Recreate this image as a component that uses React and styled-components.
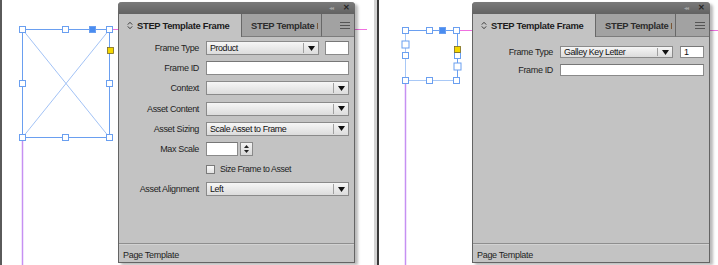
import React from 'react';
import styled, { createGlobalStyle } from 'styled-components';

const GlobalStyle = createGlobalStyle`
  html, body {
    margin: 0;
    padding: 0;
    background: #fff;
  }
  #root {
    width: 718px;
    height: 265px;
    overflow: hidden;
    font-family: "Liberation Sans", Arial, sans-serif;
  }
`;

const Page = styled.div`
  display: flex;
  width: 718px;
  height: 265px;
`;

const Shot = styled.div`
  display: flex;
  width: ${(p) => p.$w}px;
  height: 265px;
  flex: none;
`;

const Edge = styled.div`
  flex: none;
  width: ${(p) => (p.$band ? 6 : 2)}px;
  background: ${(p) =>
    p.$band
      ? 'linear-gradient(90deg, #fff 0 1px, #d3d3d3 1px 4px, #3a3a3a 4px)'
      : '#5a5a5a'};
`;

const Canvas = styled.div`
  position: relative;
  flex: 1;
  overflow: hidden;
`;

const Art = styled.svg`
  position: absolute;
  left: 0;
  top: 0;
  width: 100%;
  height: 100%;
  z-index: 0;
`;

const Panel = styled.div`
  position: relative;
  z-index: 1;
  box-sizing: border-box;
  width: ${(p) => p.$w}px;
  height: 261px;
  margin: 2px 0 0 ${(p) => p.$left}px;
  display: flex;
  flex-direction: column;
  background: #c3c3c3;
  border: 1px solid #646464;
  border-top: none;
  border-radius: 4px 4px 0 0;
  box-shadow: 3px 2px 3px rgba(0, 0, 0, 0.28);
`;

const TitleBar = styled.div`
  height: 12px;
  margin: 0 -1px;
  display: flex;
  align-items: center;
  justify-content: flex-end;
  gap: 10px;
  padding-right: 5px;
  border-radius: 4px 4px 0 0;
  background: linear-gradient(#7a7a7a, #626262);
`;

const Collapse = styled.span`
  font-size: 6px;
  letter-spacing: -1px;
  color: #a4a4a4;
  line-height: 1;
`;

const Close = styled.span`
  font-size: 8px;
  font-weight: bold;
  color: #262626;
  line-height: 1;
`;

const TabRow = styled.div`
  height: 23px;
  display: flex;
  background: #a2a2a2;
`;

const Tab = styled.div`
  box-sizing: border-box;
  flex: none;
  width: ${(p) => p.$w}px;
  display: flex;
  align-items: center;
  gap: 4px;
  padding: 0 ${(p) => (p.$active ? 0 : 3)}px 0 ${(p) => (p.$active ? 8 : 9)}px;
  overflow: hidden;
  white-space: nowrap;
  font-size: 9.4px;
  letter-spacing: -0.3px;
  font-weight: bold;
  color: ${(p) => (p.$active ? '#1c1c1c' : '#2c2c2c')};
  background: ${(p) => (p.$active ? '#c3c3c3' : '#a2a2a2')};
  border-right: 1px solid #686868;
  border-bottom: ${(p) => (p.$active ? 'none' : '1px solid #7c7c7c')};
`;

const TabLabel = styled.span`
  overflow: hidden;
  white-space: nowrap;
  min-width: 0;
`;

const MenuArea = styled.div`
  flex: 1;
  display: flex;
  align-items: center;
  justify-content: flex-end;
  padding-right: 4px;
  border-bottom: 1px solid #7c7c7c;
`;

const Body = styled.div`
  flex: 1;
  padding: ${(p) => p.$top}px 5px 0 0;
`;

const Form = styled.div`
  display: grid;
  grid-template-columns: 80px 1fr;
  column-gap: 7px;
  row-gap: ${(p) => p.$gap}px;
  grid-auto-rows: ${(p) => p.$row}px;
  align-items: center;
`;

const Label = styled.div`
  text-align: right;
  font-size: 9px;
  letter-spacing: -0.35px;
  color: #1e1e1e;
  white-space: nowrap;
`;

const Control = styled.div`
  display: flex;
  align-items: center;
  gap: ${(p) => p.$gap || 6}px;
  height: 100%;
`;

const SelectBox = styled.div`
  box-sizing: border-box;
  flex: 1;
  height: 100%;
  display: flex;
  align-items: center;
  border: 1px solid #8a8a8a;
  background: linear-gradient(#f6f6f6, #dcdcdc);
`;

const SelectText = styled.span`
  flex: 1;
  padding-left: 3px;
  font-size: 8.9px;
  letter-spacing: -0.4px;
  color: #111;
  white-space: nowrap;
`;

const Arrow = styled.span`
  width: 14px;
  height: calc(100% - 2px);
  display: flex;
  align-items: center;
  justify-content: center;
  border-left: 1px solid #a0a0a0;
`;

const TextField = styled.div`
  box-sizing: border-box;
  height: 100%;
  width: ${(p) => (p.$w ? `${p.$w}px` : 'auto')};
  flex: ${(p) => (p.$w ? 'none' : 1)};
  display: flex;
  align-items: center;
  padding-left: 3px;
  font-size: 9px;
  color: #111;
  background: #fff;
  border: 1px solid #8a8a8a;
  border-top-color: #777;
`;

const Spinner = styled.div`
  box-sizing: border-box;
  width: 13px;
  height: 100%;
  display: flex;
  flex-direction: column;
  align-items: center;
  justify-content: center;
  gap: 2px;
  border: 1px solid #8a8a8a;
  background: linear-gradient(#f4f4f4, #d8d8d8);
`;

const CheckRow = styled.label`
  display: flex;
  align-items: center;
  gap: 5px;
  font-size: 8.8px;
  letter-spacing: -0.4px;
  color: #1e1e1e;
`;

const CheckBox = styled.span`
  box-sizing: border-box;
  width: 9px;
  height: 9px;
  border: 1px solid #7a7a7a;
  background: linear-gradient(#fafafa, #e2e2e2);
`;

const Status = styled.div`
  box-sizing: border-box;
  height: 19px;
  display: flex;
  align-items: center;
  padding: 3px 0 0 4px;
  font-size: 9px;
  letter-spacing: -0.3px;
  color: #1e1e1e;
  border-top: 1px solid #8e8e8e;
  box-shadow: inset 0 1px 0 #d2d2d2;
`;

const Down = () => (
  <svg width="7" height="5" viewBox="0 0 7 5">
    <path d="M0 0H7L3.5 5Z" fill="#111" />
  </svg>
);

const UpDown = () => (
  <svg width="6" height="9" viewBox="0 0 6 9">
    <path d="M0.8 3.6L3 1.3L5.2 3.6M0.8 5.4L3 7.7L5.2 5.4" fill="none" stroke="#3a3a3a" strokeWidth="1" />
  </svg>
);

const Hamburger = () => (
  <svg width="10" height="7" viewBox="0 0 10 7">
    <path d="M0 0.5H10M0 3.5H10M0 6.5H10" stroke="#555" strokeWidth="1" />
  </svg>
);

const Handle = ({ x, y, s = 6, fill = '#fff' }) => (
  <rect x={x - s / 2} y={y - s / 2} width={s} height={s} fill={fill} stroke="#6a9ff0" strokeWidth="1" />
);

function Select({ value }) {
  return (
    <SelectBox>
      <SelectText>{value}</SelectText>
      <Arrow>
        <Down />
      </Arrow>
    </SelectBox>
  );
}

function PanelHead() {
  return (
    <>
      <TitleBar>
        <Collapse>◂◂</Collapse>
        <Close>✕</Close>
      </TitleBar>
      <TabRow>
        <Tab $active $w={123}>
          <UpDown />
          STEP Template Frame
        </Tab>
        <Tab $w={80}>
          <TabLabel>STEP Template Frame</TabLabel>
        </Tab>
        <MenuArea>
          <Hamburger />
        </MenuArea>
      </TabRow>
    </>
  );
}

function LeftShot() {
  return (
    <Shot $w={373}>
      <Edge />
      <Canvas>
        <Art viewBox="0 0 371 265">
          <line x1="107" y1="29.5" x2="365" y2="29.5" stroke="#f070e0" />
          <line x1="20.5" y1="137" x2="20.5" y2="265" stroke="#c690f2" strokeWidth="1.5" />
          <rect x="20.5" y="29.5" width="87" height="108" fill="none" stroke="#6a9ff0" />
          <line x1="20.5" y1="29.5" x2="107.5" y2="137.5" stroke="#8ab2f2" strokeWidth="0.8" />
          <line x1="107.5" y1="29.5" x2="20.5" y2="137.5" stroke="#8ab2f2" strokeWidth="0.8" />
          <Handle x={20.5} y={29.5} />
          <Handle x={63.5} y={29.5} />
          <Handle x={107.5} y={29.5} />
          <Handle x={20.5} y={83.5} />
          <Handle x={107.5} y={83.5} />
          <Handle x={20.5} y={137.5} />
          <Handle x={63.5} y={137.5} />
          <Handle x={107.5} y={137.5} />
          <Handle x={90.5} y={29.5} fill="#4a8cf0" />
          <rect x="105.5" y="47.5" width="6" height="6" fill="#f4d600" stroke="#7a6a20" strokeWidth="0.8" />
        </Art>
        <Panel $w={237} $left={116}>
          <PanelHead />
          <Body $top={4}>
            <Form $gap={6.2} $row={14}>
              <Label>Frame Type</Label>
              <Control>
                <Select value="Product" />
                <TextField $w={24} />
              </Control>
              <Label>Frame ID</Label>
              <Control>
                <TextField />
              </Control>
              <Label>Context</Label>
              <Control>
                <Select value="" />
              </Control>
              <Label>Asset Content</Label>
              <Control>
                <Select value="" />
              </Control>
              <Label>Asset Sizing</Label>
              <Control>
                <Select value="Scale Asset to Frame" />
              </Control>
              <Label>Max Scale</Label>
              <Control $gap={2}>
                <TextField $w={32} />
                <Spinner>
                  <svg width="5" height="3" viewBox="0 0 5 3">
                    <path d="M0 3H5L2.5 0Z" fill="#222" />
                  </svg>
                  <svg width="5" height="3" viewBox="0 0 5 3">
                    <path d="M0 0H5L2.5 3Z" fill="#222" />
                  </svg>
                </Spinner>
              </Control>
              <span />
              <CheckRow>
                <CheckBox />
                Size Frame to Asset
              </CheckRow>
              <Label>Asset Alignment</Label>
              <Control>
                <Select value="Left" />
              </Control>
            </Form>
          </Body>
          <Status>Page Template</Status>
        </Panel>
      </Canvas>
    </Shot>
  );
}

function RightShot() {
  return (
    <Shot $w={345}>
      <Edge $band />
      <Canvas>
        <Art viewBox="0 0 339 265">
          <line x1="78" y1="30.5" x2="339" y2="30.5" stroke="#f070e0" />
          <line x1="26.5" y1="80" x2="26.5" y2="265" stroke="#c690f2" strokeWidth="1.5" />
          <line x1="26.5" y1="30.5" x2="78.5" y2="30.5" stroke="#6a9ff0" />
          <line x1="78.5" y1="30.5" x2="78.5" y2="80.5" stroke="#6a9ff0" />
          <line x1="26.5" y1="30.5" x2="26.5" y2="80.5" stroke="#a8c8f6" />
          <line x1="26.5" y1="80.5" x2="78.5" y2="80.5" stroke="#a8c8f6" />
          <Handle x={26.5} y={30.5} />
          <Handle x={50.5} y={30.5} />
          <Handle x={77.5} y={30.5} />
          <Handle x={63.5} y={30.5} fill="#4a8cf0" />
          <Handle x={26.5} y={44.5} s={7} />
          <Handle x={26.5} y={55.5} />
          <Handle x={78.5} y={55.5} />
          <Handle x={78.5} y={66.5} s={7} />
          <rect x="75.5" y="46.5" width="6" height="6" fill="#f4d600" stroke="#7a6a20" strokeWidth="0.8" />
          <Handle x={26.5} y={80.5} />
          <Handle x={50.5} y={80.5} />
          <Handle x={77.5} y={80.5} />
        </Art>
        <Panel $w={238} $left={93}>
          <PanelHead />
          <Body $top={9}>
            <Form $gap={6} $row={12}>
              <Label>Frame Type</Label>
              <Control $gap={7}>
                <Select value="Galley Key Letter" />
                <TextField $w={24}>1</TextField>
              </Control>
              <Label>Frame ID</Label>
              <Control>
                <TextField />
              </Control>
            </Form>
          </Body>
          <Status>Page Template</Status>
        </Panel>
      </Canvas>
    </Shot>
  );
}

export default function App() {
  return (
    <>
      <GlobalStyle />
      <Page>
        <LeftShot />
        <RightShot />
      </Page>
    </>
  );
}
